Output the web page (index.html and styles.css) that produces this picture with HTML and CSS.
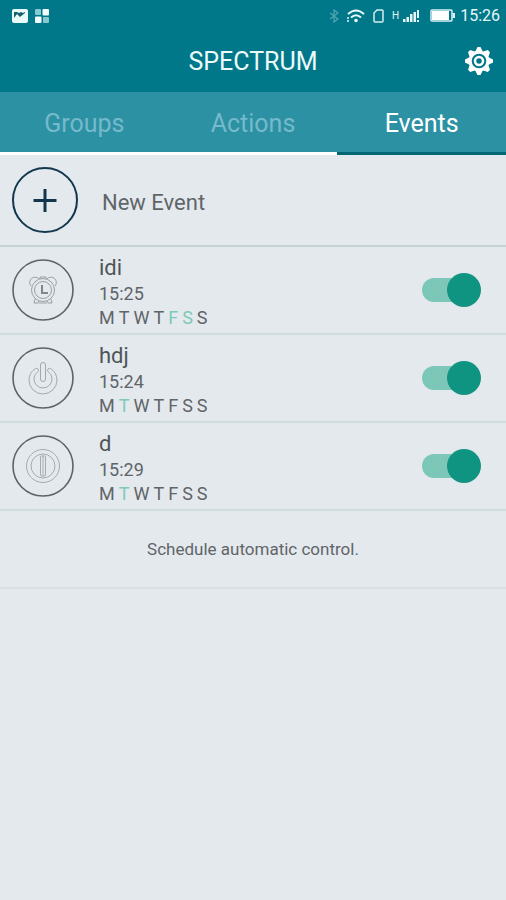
FILE: index.html
```html
<!DOCTYPE html>
<html lang="en">
<head>
<meta charset="utf-8">
<meta name="viewport" content="width=device-width, initial-scale=1">
<title>Spectrum</title>
<link rel="stylesheet" href="styles.css">
</head>
<body>
<div class="status">
  <svg width="16" height="14" viewBox="0 0 16 14" aria-hidden="true"><rect width="16" height="14" rx="2" fill="#e9fafa"/><path d="M2 3v6l3-4 3 3 5-4V3l-2 1-2-1-2 1-2-1z" fill="#17616d"/></svg>
  <svg width="14" height="14" viewBox="0 0 14 14" aria-hidden="true"><rect width="6" height="6" rx="1" fill="#86c9d0"/><rect x="7.500" width="6.500" height="6.500" rx="1" fill="#f2ffff"/><rect y="7.500" width="6.500" height="6.500" rx="1" fill="#f2ffff"/><rect x="8" y="8" width="6" height="6" rx="1" fill="#86c9d0"/></svg>
  <div class="status-right">
    <svg width="10" height="14" viewBox="0 0 10 14" fill="none" stroke="#4fa5b1" stroke-width="1.300" aria-hidden="true"><path d="M1 4l8 6-4 3V1l4 3-8 6"/></svg>
    <svg width="18" height="14" viewBox="0 0 18 14" fill="none" stroke="#e6f8f9" stroke-width="2" aria-hidden="true"><path d="M1 5q8-7 16 0M4 8.500q5-4.500 10 0"/><circle cx="9" cy="11.500" r="1.800" fill="#e6f8f9" stroke="none"/><path d="M1 8v5" stroke-width="1.500" stroke-dasharray="2 1"/></svg>
    <svg width="11" height="14" viewBox="0 0 11 14" fill="none" stroke="#d4eef0" stroke-width="1.500" aria-hidden="true"><path d="M4 1h5q1 0 1 1v10q0 1-1 1H2q-1 0-1-1V4z"/></svg>
    <span class="net">H</span>
    <svg class="signal" width="16" height="12" viewBox="0 0 16 12" fill="#e6f8f9" aria-hidden="true"><path d="M0 9h2.500v3H0zM3.500 7H6v5H3.500zM7 4h2.500v8H7zM10.500 2H13v10h-2.500zM14 0h2v8h-2zM14 10h2v2h-2z"/></svg>
    <svg class="battery" width="25" height="13" viewBox="0 0 25 13" aria-hidden="true"><rect x="1" y="1" width="21" height="11" rx="1" fill="none" stroke="#d8f1f3" stroke-width="1.500"/><path d="M2 2h17v9H2z" fill="#fff"/><path d="M22.500 4H25v5h-2.500z" fill="#d8f1f3"/></svg>
    <span class="clock">15:26</span>
  </div>
</div>
<header class="bar">
  <h1>SPECTRUM</h1>
  <button class="settings" type="button" aria-label="Settings">
    <svg width="30" height="30" viewBox="-15 -15 30 30" aria-hidden="true">
      <g fill="#fff">
        <g id="teeth"><path id="tooth" d="M-4-9L-1.500-14H1.500L4-9zM-4 9L-1.500 14H1.500L4 9z"/><use href="#tooth" transform="rotate(45)"/></g>
        <use href="#teeth" transform="rotate(90)"/>
      </g>
      <circle r="8.800" fill="#007889" stroke="#fff" stroke-width="3"/>
      <circle r="4" fill="none" stroke="#fff" stroke-width="2.500"/>
    </svg>
  </button>
</header>
<nav class="tabs">
  <a href="#groups">Groups</a>
  <a href="#actions">Actions</a>
  <a class="active" href="#events" aria-current="page">Events</a>
</nav>
<main>
  <button class="new" type="button">
    <svg width="66" height="66" viewBox="0 0 66 66" fill="none" stroke="#12374d" aria-hidden="true"><circle cx="33" cy="33" r="32" stroke-width="2"/><path d="M33 22v23M21.500 33.500h23" stroke-width="3"/></svg>
    <span>New Event</span>
  </button>
  <ul class="events">
    <li>
      <svg width="62" height="62" viewBox="-31 -31 62 62" fill="none" stroke="#989fa3" aria-hidden="true">
        <circle r="30" stroke="#5c6266" stroke-width="1.600"/>
        <circle r="11.500"/><circle r="8.500"/>
        <path d="M-12-4A5 5 0 1 1-4-11M12-4A5 5 0 1 0 4-11M-3-11v-2h6v2M-8 9l-1 4h4l1-2M8 9l1 4H5l-1-2M-4 13h8"/>
        <path d="M-1-5v8h6" stroke="#7f878b" stroke-width="2"/>
      </svg>
      <div class="info"><h2>idi</h2><time>15:25</time><p class="days"><span>M</span><span>T</span><span>W</span><span>T</span><span class="on">F</span><span class="on">S</span><span>S</span></p></div>
      <input class="switch" type="checkbox" role="switch" aria-label="idi" checked>
    </li>
    <li>
      <svg width="62" height="62" viewBox="-31 -31 62 62" fill="none" stroke="#a2a8ab" aria-hidden="true">
        <circle r="30" stroke="#5c6266" stroke-width="1.600"/>
        <path d="M-7.500-9.500A2 2 0 0 1-5-6.500A9 9 0 1 0 5-6.500A2 2 0 0 1 7.500-9.500A14 14 0 0 1 14 2A14 14 0 0 1-14 2A14 14 0 0 1-7.500-9.500z"/>
        <rect x="-2.500" y="-15.500" width="5" height="19" rx="2.500"/>
      </svg>
      <div class="info"><h2>hdj</h2><time>15:24</time><p class="days"><span>M</span><span class="on">T</span><span>W</span><span>T</span><span>F</span><span>S</span><span>S</span></p></div>
      <input class="switch" type="checkbox" role="switch" aria-label="hdj" checked>
    </li>
    <li>
      <svg width="62" height="62" viewBox="-31 -31 62 62" fill="none" stroke="#a4abae" aria-hidden="true">
        <circle r="30" stroke="#5c6266" stroke-width="1.600"/>
        <circle r="16.500"/><circle r="12"/>
        <rect x="-2.500" y="-10" width="5" height="20" rx="1"/><path d="M0-10v20"/>
      </svg>
      <div class="info"><h2>d</h2><time>15:29</time><p class="days"><span>M</span><span class="on">T</span><span>W</span><span>T</span><span>F</span><span>S</span><span>S</span></p></div>
      <input class="switch" type="checkbox" role="switch" aria-label="d" checked>
    </li>
  </ul>
  <p class="note">Schedule automatic control.</p>
</main>
</body>
</html>
```
FILE: styles.css
```css
* { box-sizing: border-box; }
body {
  margin: 0;
  min-height: 100vh;
  background: #e4e9ed;
  color: #5f6569;
  font-family: Roboto, "Liberation Sans", sans-serif;
}
h1, h2, p, ul { margin: 0; padding: 0; font-weight: 400; }
button { border: 0; background: none; padding: 0; font: inherit; color: inherit; cursor: pointer; }
svg { display: block; flex: none; }

.status {
  display: flex;
  align-items: center;
  gap: 7px;
  height: 31px;
  padding: 0 6px 0 12px;
  background: #007889;
  color: #e6f8f9;
}
.status-right { display: flex; align-items: center; gap: 8px; margin-left: auto; }
.net { font-size: 10px; }
.signal { margin-left: -4px; }
.battery { margin-left: 3px; }
.clock { font-size: 16px; margin-left: -3px; }

.bar {
  display: grid;
  grid-template-columns: 1fr auto 1fr;
  align-items: center;
  height: 61px;
  padding: 0 12px;
  background: #007889;
  color: #eefafa;
}
.bar h1 { grid-column: 2; font-size: 25px; line-height: 30px; }
.settings { justify-self: end; padding-bottom: 2px; }

.tabs { display: flex; background: #2c91a3; }
.tabs a {
  flex: 1;
  height: 63px;
  border-bottom: 3px solid #fff;
  color: #76b9cc;
  font-size: 25px;
  line-height: 64px;
  text-align: center;
  text-decoration: none;
}
.tabs .active { border-color: #006775; color: #fff; }

.new {
  display: flex;
  align-items: center;
  gap: 24px;
  width: 100%;
  height: 92px;
  padding: 0 12px;
  border-bottom: 2px solid #c3d2d5;
  font-size: 22px;
}
.new span { padding-top: 4px; }
.events { list-style: none; }
.events li {
  display: flex;
  align-items: center;
  gap: 25px;
  padding: 4px 25px 4px 12px;
  border-bottom: 2px solid #d0dcdf;
}
.info { flex: 1; padding-top: 4px; }
.info h2 { font-size: 22px; line-height: 26px; color: #4f5558; }
.info time { display: block; font-size: 18px; line-height: 26px; }
.days { display: flex; gap: 4px; font-size: 18px; line-height: 22px; }
.days .on { color: #7cc9ba; }

.switch {
  appearance: none;
  position: relative;
  display: flex;
  align-items: center;
  justify-content: flex-end;
  width: 59px;
  height: 34px;
  margin: 0;
  cursor: pointer;
}
.switch::before {
  content: "";
  position: absolute;
  inset: 5px 6px 5px 0;
  border-radius: 12px;
  background: #7dc7b9;
}
.switch::after {
  content: "";
  position: relative;
  width: 34px;
  height: 34px;
  border-radius: 50%;
  background: #109482;
}
.switch:not(:checked) { justify-content: flex-start; }

.note {
  padding: 26px 16px;
  border-bottom: 2px solid #d9e0e4;
  font-size: 17px;
  line-height: 24px;
  text-align: center;
}
```
